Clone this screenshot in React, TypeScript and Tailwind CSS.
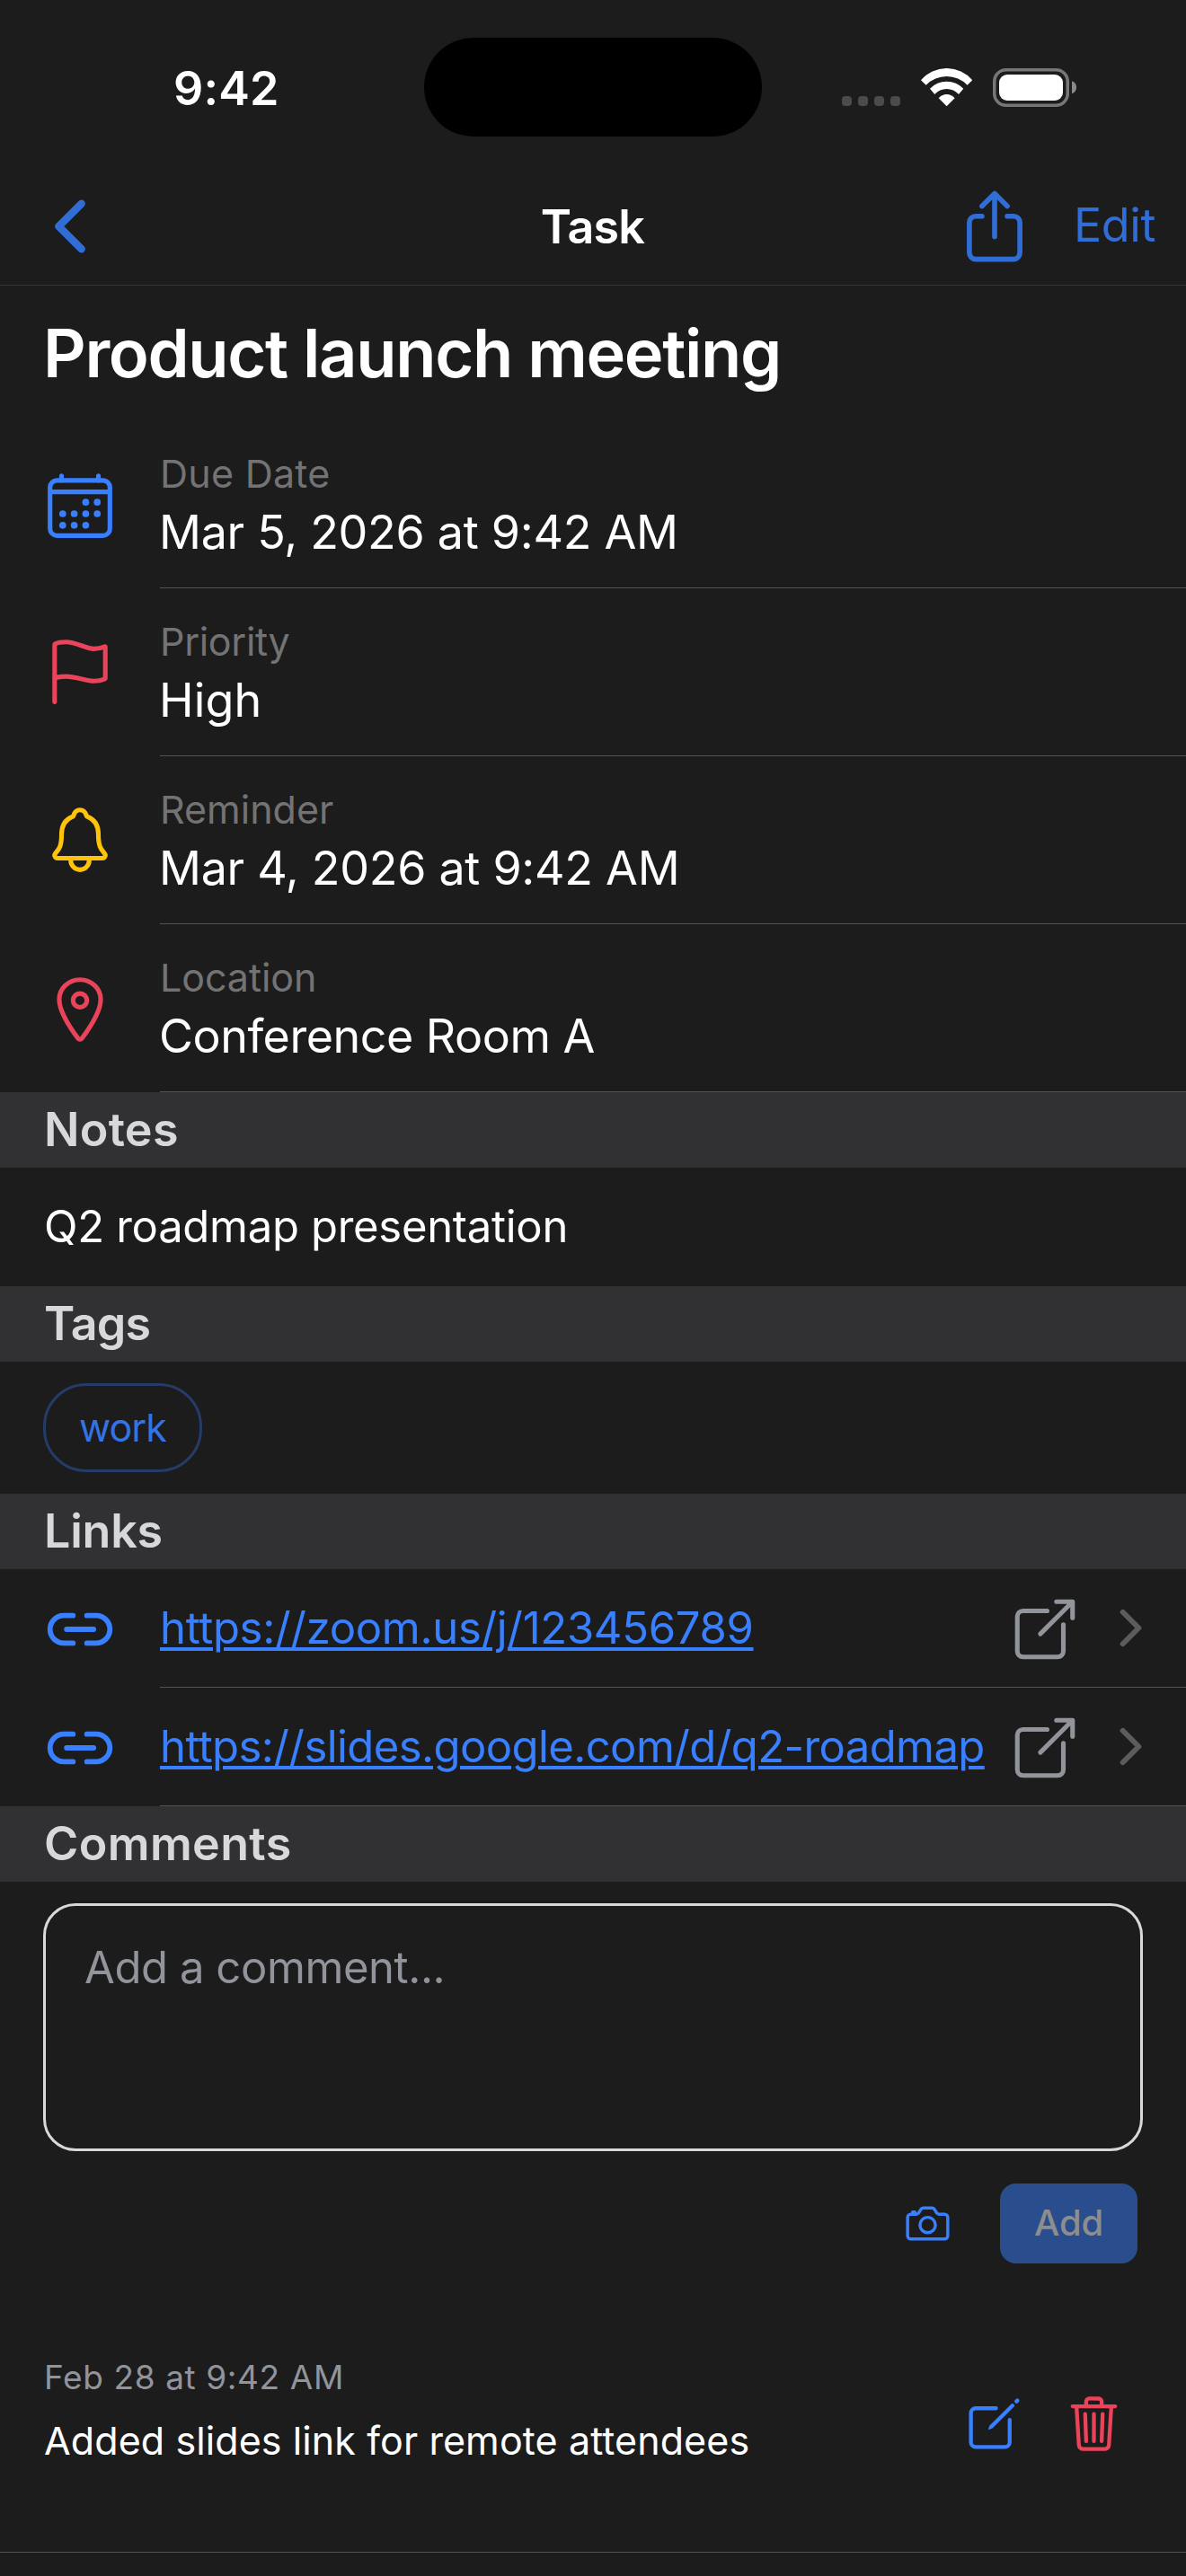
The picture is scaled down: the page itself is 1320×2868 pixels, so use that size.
import { useState } from 'react';
import type { ReactNode } from 'react';
import type { IconType } from 'react-icons';
import {
  IoCalendarOutline,
  IoCameraOutline,
  IoChevronBack,
  IoChevronForward,
  IoCreateOutline,
  IoFlagOutline,
  IoLinkOutline,
  IoLocationOutline,
  IoNotificationsOutline,
  IoOpenOutline,
  IoShareOutline,
  IoTrashOutline,
} from 'react-icons/io5';

interface DetailItem {
  label: string;
  value: string;
  icon: IconType;
  iconClass: string;
  labelClass: string;
  valueClass: string;
}

interface LinkItem {
  url: string;
  className: string;
}

const details: DetailItem[] = [
  {
    label: 'Due Date',
    value: 'Mar 5, 2026 at 9:42 AM',
    icon: IoCalendarOutline,
    iconClass: 'mt-0.5 text-[#3880ff]',
    labelClass: 'tracking-[0.26px]',
    valueClass: 'tracking-[-0.29px]',
  },
  {
    label: 'Priority',
    value: 'High',
    icon: IoFlagOutline,
    iconClass: 'mb-px text-[#eb445a]',
    labelClass: 'tracking-[-0.3px]',
    valueClass: 'tracking-[0.1px]',
  },
  {
    label: 'Reminder',
    value: 'Mar 4, 2026 at 9:42 AM',
    icon: IoNotificationsOutline,
    iconClass: 'mb-px text-[#ffc409]',
    labelClass: 'tracking-normal',
    valueClass: 'tracking-[-0.29px]',
  },
  {
    label: 'Location',
    value: 'Conference Room A',
    icon: IoLocationOutline,
    iconClass: 'mt-0.5 text-[#eb445a]',
    labelClass: 'tracking-[-0.07px]',
    valueClass: 'tracking-[-0.5px]',
  },
];

const links: LinkItem[] = [
  { url: 'https://zoom.us/j/123456789', className: 'tracking-[-0.31px]' },
  { url: 'https://slides.google.com/d/q2-roadmap', className: 'tracking-[-0.59px]' },
];

function StatusBar() {
  return (
    <div className="h-[186px] pt-[42px]">
      <div className="grid h-[110px] grid-cols-[472px_376px_472px] items-center">
        <span className="pt-[3px] pl-[193px] text-[52px] leading-[64px] font-semibold tracking-[0.21px]">
          9:42
        </span>
        <div className="h-[110px] rounded-[55px] bg-black" />
        <div className="flex h-[43px] items-start pl-[89px]">
          <div className="mt-[31px] flex gap-[7px]">
            {[0, 1, 2, 3].map((i) => (
              <span key={i} className="size-[11px] rounded-[4px] bg-[#4b4b4d]" />
            ))}
          </div>
          <svg className="ml-[23px]" width="57.3" height="43" viewBox="0 0 57.3 43" fill="#fff">
            <path d="M0 13.3A37.5 37.5 0 0 1 57.3 13.3L51.6 18.7A32 32 0 0 0 5.7 18.7Z" />
            <path d="M10 22.7A25.7 25.7 0 0 1 47.3 22.7L42 29A17.9 17.9 0 0 0 15.3 29Z" />
            <path d="M19.7 33.3A11.6 11.6 0 0 1 37.6 33.3L28.65 42.3Z" />
          </svg>
          <svg className="ml-[22.7px]" width="93" height="43" viewBox="0 0 93 43">
            <rect x="1.75" y="1.75" width="81.5" height="39.5" rx="13" fill="none" stroke="#777778" strokeWidth="3.5" />
            <rect x="7" y="7" width="71" height="29" rx="9" fill="#fff" />
            <path d="M88 14.3c3 .8 5 3.6 5 7s-2 6.200-5 7z" fill="#8a8a8b" />
          </svg>
        </div>
      </div>
    </div>
  );
}

function Toolbar() {
  return (
    <header className="flex h-[132px] items-center border-b border-[#353537] pr-[34px] pl-[33px]">
      <div className="flex flex-1">
        <IoChevronBack className="size-[90px] text-[#306dd6]" />
      </div>
      <h1 className="pt-[3px] text-[52px] leading-[64px] font-semibold tracking-[-0.81px]">Task</h1>
      <div className="flex flex-1 items-center justify-end gap-[43px] text-[#306dd6]">
        <IoShareOutline className="size-[90px]" />
        <button className="pb-px text-[52px] leading-[64px] tracking-[-0.43px]">Edit</button>
      </div>
    </header>
  );
}

function SectionHeader({ children, className }: { children: ReactNode; className: string }) {
  return (
    <h3 className={`h-[84px] bg-[#313133] pl-[49px] text-[52px] leading-[84px] font-semibold text-[#d7d8da] ${className}`}>
      {children}
    </h3>
  );
}

export default function App() {
  const [comment, setComment] = useState('');

  return (
    <div className="min-h-[2868px] w-[1320px] overflow-hidden bg-[#1c1c1d] font-['Inter',sans-serif] text-white">
      <StatusBar />
      <Toolbar />

      <h2 className="h-[150px] pt-[30px] pl-12 text-[74px] leading-[90px] font-semibold tracking-[-1.35px]">
        Product launch meeting
      </h2>

      {details.map((item) => (
        <div key={item.label} className="flex h-[187px] items-stretch gap-12 pl-12">
          <item.icon className={`size-[82px] shrink-0 self-center ${item.iconClass}`} />
          <div className="flex-1 border-b border-[#535354] pt-[33px]">
            <p className={`text-[43px] leading-[52px] text-[#737374] ${item.labelClass}`}>{item.label}</p>
            <p className={`mt-2 -ml-px text-[52px] leading-[64px] ${item.valueClass}`}>{item.value}</p>
          </div>
        </div>
      ))}

      <SectionHeader className="tracking-[0.29px]">Notes</SectionHeader>
      <p className="h-[132px] pl-[49px] text-[49px] leading-[132px] tracking-[-0.3px]">Q2 roadmap presentation</p>

      <SectionHeader className="tracking-[-0.8px]">Tags</SectionHeader>
      <div className="flex h-[147px] items-center pl-12">
        <span className="flex h-[99px] w-[177px] items-center justify-center rounded-[48px] border-[3px] border-[#243c67] text-[43px] leading-none tracking-[-0.89px] text-[#3373e6]">
          work
        </span>
      </div>

      <SectionHeader className="tracking-[-0.23px]">Links</SectionHeader>
      {links.map((link) => (
        <div key={link.url} className="flex h-[132px] items-stretch gap-12 pl-12">
          <IoLinkOutline className="mt-0.5 size-[82px] shrink-0 self-center text-[#3880ff]" />
          <div className="flex flex-1 items-center border-b border-[#535354] pr-[30px]">
            <a
              href={link.url}
              className={`flex-1 text-[49px] leading-[60px] whitespace-nowrap text-[#3880ff] underline decoration-[4px] underline-offset-[4px] ${link.className}`}
            >
              {link.url}
            </a>
            <IoOpenOutline className="mt-0.5 mr-[23px] size-[82px] shrink-0 text-[#92949c]" />
            <IoChevronForward className="size-[63px] shrink-0 text-[#5c5c5d]" />
          </div>
        </div>
      ))}

      <SectionHeader className="tracking-[0.36px]">Comments</SectionHeader>
      <div className="px-12 pt-6">
        <textarea
          value={comment}
          onChange={(e) => setComment(e.target.value)}
          placeholder="Add a comment..."
          className="block h-[276px] w-full resize-none rounded-[36px] border-[3px] border-[#d7d8da] bg-transparent px-[43px] py-[39px] text-[49px] leading-[60px] tracking-[-0.42px] outline-none placeholder:text-[#92949c]"
        />
      </div>
      <div className="mt-9 flex h-[89px] items-center justify-end gap-[53px] pr-[54px]">
        <IoCameraOutline className="size-[55px] text-[#3880ff]" />
        <button className="h-[89px] w-[153px] rounded-[18px] bg-[#2a4e8d] pb-0.5 text-[40px] font-medium tracking-[-0.24px] text-[#8d8d8e]">
          Add
        </button>
      </div>

      <div className="flex h-[322px] items-start border-b border-[#535354] pt-[104px] pr-[68px] pl-[49px]">
        <div className="flex-1">
          <p className="text-[37px] leading-[46px] tracking-[0.61px] text-[#92949c]">Feb 28 at 9:42 AM</p>
          <p className="mt-[21px] text-[43px] leading-[52px] tracking-[0.1px]">
            Added slides link for remote attendees
          </p>
        </div>
        <div className="mt-[40px] flex gap-[42px]">
          <IoCreateOutline className="size-[69px] text-[#3880ff]" />
          <IoTrashOutline className="size-[69px] text-[#eb445a]" />
        </div>
      </div>
    </div>
  );
}
